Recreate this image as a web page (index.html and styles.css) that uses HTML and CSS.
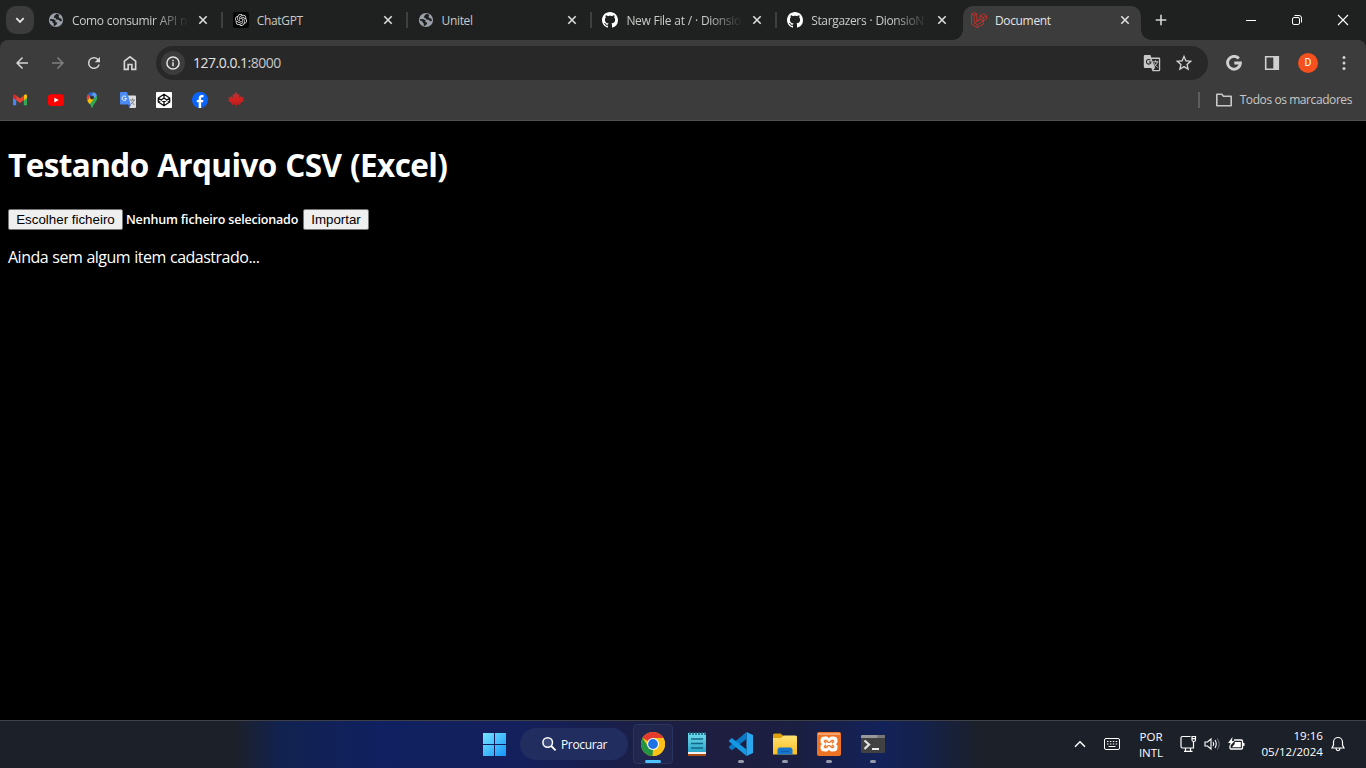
FILE: index.html
```html
<!DOCTYPE html>
<html lang="pt">
<head>
<meta charset="utf-8">
<title>Document</title>
<link rel="stylesheet" href="styles.css">
</head>
<body>
<svg class="defs" width="0" height="0">
  <symbol id="globe" viewBox="0 0 16 16"><circle cx="8" cy="8" r="7.1" fill="#9aa0a9"/><path d="M8.5 1.8 6.6 3.6 5.8 5.4 7.7 6.2 8.2 7.6 10.8 7.7 12 9.3 14 8.9 13.2 6.6 11.5 6.2 10.6 4.6 11.3 2.8ZM2 7 5.9 7.2 7.6 8.6 7.4 10 9.3 10.8 8.6 12.5 6.5 14 5.7 13.6 5.8 11.4 4.6 10.6 4.2 9.2 2 8.5Z" fill="#1f2120"/></symbol>
  <symbol id="close" viewBox="0 0 10 10"><path d="M1.3 1.3 8.7 8.7M8.7 1.3 1.3 8.7" stroke="#dedede" stroke-width="1.6"/></symbol>
  <symbol id="github" viewBox="0 0 16 16"><path fill="#fff" d="M8 0C3.58 0 0 3.58 0 8c0 3.54 2.29 6.53 5.47 7.59.4.07.55-.17.55-.38 0-.19-.01-.82-.01-1.49-2.01.37-2.53-.49-2.69-.94-.09-.23-.48-.94-.82-1.13-.28-.15-.68-.52-.01-.53.63-.01 1.08.58 1.23.82.72 1.21 1.87.87 2.33.66.07-.52.28-.87.51-1.07-1.78-.2-3.64-.89-3.64-3.95 0-.87.31-1.59.82-2.15-.08-.2-.36-1.02.08-2.12 0 0 .67-.21 2.2.82.64-.18 1.32-.27 2-.27s1.36.09 2 .27c1.53-1.04 2.2-.82 2.2-.82.44 1.1.16 1.92.08 2.12.51.56.82 1.27.82 2.15 0 3.07-1.87 3.75-3.65 3.95.29.25.54.73.54 1.48 0 1.07-.01 1.93-.01 2.2 0 .21.15.46.55.38A8.01 8.01 0 0016 8c0-4.42-3.58-8-8-8z"/></symbol>
</svg>

<header class="tabstrip">
  <div class="tab-search"><svg width="10" height="10" viewBox="0 0 10 10"><path d="M1.3 3.2 5 6.9 8.7 3.2" fill="none" stroke="#e3e3e3" stroke-width="1.8"/></svg></div>
  <div class="tab"><svg class="fav"><use href="#globe"/></svg><span class="title fade">Como consumir API n</span><svg class="x"><use href="#close"/></svg></div>
  <div class="tab"><svg class="fav" viewBox="0 0 16 16"><rect width="16" height="16" rx="2" fill="#050506"/><g transform="translate(2 1.9) scale(.5)"><path fill="#e4e4e4" d="M22.2819 9.8211a5.9847 5.9847 0 0 0-.5157-4.9108 6.0462 6.0462 0 0 0-6.5098-2.9A6.0651 6.0651 0 0 0 4.9807 4.1818a5.9847 5.9847 0 0 0-3.9977 2.9 6.0462 6.0462 0 0 0 .7427 7.0966 5.98 5.98 0 0 0 .511 4.9107 6.051 6.051 0 0 0 6.5146 2.9001A5.9847 5.9847 0 0 0 13.2599 24a6.0557 6.0557 0 0 0 5.7718-4.2058 5.9894 5.9894 0 0 0 3.9977-2.9001 6.0557 6.0557 0 0 0-.7475-7.0729zm-9.022 12.6081a4.4755 4.4755 0 0 1-2.8764-1.0408l.1419-.0804 4.7783-2.7582a.7948.7948 0 0 0 .3927-.6813v-6.7369l2.02 1.1686a.071.071 0 0 1 .038.052v5.5826a4.504 4.504 0 0 1-4.4945 4.4944zm-9.6607-4.1254a4.4708 4.4708 0 0 1-.5346-3.0137l.142.0852 4.783 2.7582a.7712.7712 0 0 0 .7806 0l5.8428-3.3685v2.3324a.0804.0804 0 0 1-.0332.0615L9.74 19.9502a4.4992 4.4992 0 0 1-6.1408-1.6464zM2.3408 7.8956a4.485 4.485 0 0 1 2.3655-1.9728V11.6a.7664.7664 0 0 0 .3879.6765l5.8144 3.3543-2.0201 1.1685a.0757.0757 0 0 1-.071 0l-4.8303-2.7865A4.504 4.504 0 0 1 2.3408 7.872zm16.5963 3.8558L13.1038 8.364 15.1192 7.2a.0757.0757 0 0 1 .071 0l4.8303 2.7913a4.4944 4.4944 0 0 1-.6765 8.1042v-5.6772a.79.79 0 0 0-.407-.667zm2.0107-3.0231l-.142-.0852-4.7735-2.7818a.7759.7759 0 0 0-.7854 0L9.409 9.2297V6.8974a.0662.0662 0 0 1 .0284-.0615l4.8303-2.7866a4.4992 4.4992 0 0 1 6.6802 4.66zM8.3065 12.863l-2.02-1.1638a.0804.0804 0 0 1-.038-.0567V6.0742a4.4992 4.4992 0 0 1 7.3757-3.4537l-.142.0805L8.704 5.459a.7948.7948 0 0 0-.3927.6813zm1.0976-2.3654l2.602-1.4998 2.6069 1.4998v2.9994l-2.5974 1.4997-2.6067-1.4997Z"/></g></svg><span class="title">ChatGPT</span><svg class="x"><use href="#close"/></svg></div>
  <div class="tab"><svg class="fav"><use href="#globe"/></svg><span class="title">Unitel</span><svg class="x"><use href="#close"/></svg></div>
  <div class="tab"><svg class="fav"><use href="#github"/></svg><span class="title fade">New File at / · Dionsio</span><svg class="x"><use href="#close"/></svg></div>
  <div class="tab last"><svg class="fav"><use href="#github"/></svg><span class="title fade">Stargazers · DionsioN</span><svg class="x"><use href="#close"/></svg></div>
  <div class="tab active"><svg class="fav" viewBox="0 0 16 16"><path d="M.5 2 3.2.5 5.8 2V9.2L9 7.3V3.8L12.5 1.8 15.5 3.6V7L12.4 8.8V12L6.3 15.5.5 12.2ZM.5 2 3.2 3.5 5.8 2M3.2 3.5V10.8L6.3 12.5 12.4 9M6.3 12.5V15.5M3.2 10.8 9.3 7.3 12.4 8.8M9 3.8 12.3 5.6 15.5 3.7M12.3 5.6V8.8" fill="none" stroke="#dc3026" stroke-width=".8"/></svg><span class="title">Document</span><svg class="x"><use href="#close"/></svg></div>
  <svg class="plus" width="12" height="12" viewBox="0 0 12 12"><path d="M6 .7V11.3M.7 6H11.3" stroke="#d5d5d5" stroke-width="1.6"/></svg>
  <div class="winctl">
    <svg width="12" height="12" viewBox="0 0 12 12"><path d="M1 6.5H11" stroke="#fff"/></svg>
    <svg width="12" height="12" viewBox="0 0 12 12" fill="none" stroke="#fff"><rect x="1.5" y="3.5" width="7" height="7" rx="1.5"/><path d="M3.5 1.5H8A2.5 2.5 0 0 1 10.5 4V8.5"/></svg>
    <svg width="12" height="12" viewBox="0 0 12 12"><path d="M1 1 11 11M11 1 1 11" stroke="#fff" stroke-width="1.1"/></svg>
  </div>
</header>

<div class="chrome-wrap">
<section class="chrome">
  <div class="toolbar">
    <svg class="nav" viewBox="0 0 24 24"><path fill="#d6d6d6" d="M20 11H7.83l5.59-5.59L12 4l-8 8 8 8 1.41-1.41L7.83 13H20v-2z"/></svg>
    <svg class="nav" viewBox="0 0 24 24"><path fill="#7f7f7f" d="M12 4l-1.41 1.41L16.17 11H4v2h12.17l-5.58 5.59L12 20l8-8z"/></svg>
    <svg class="nav" viewBox="0 0 24 24"><path fill="#d6d6d6" d="M17.65 6.35A7.96 7.96 0 0 0 12 4a8 8 0 1 0 7.73 10h-2.08A6 6 0 1 1 12 6c1.66 0 3.14.69 4.22 1.78L13 11h7V4l-2.35 2.35z"/></svg>
    <svg class="nav" viewBox="0 0 24 24"><path fill="none" stroke="#d6d6d6" stroke-width="2.2" d="M4.5 20.5V9.5L12 3.7l7.5 5.8V20.5h-5v-6.5h-5v6.5z"/></svg>
    <div class="omnibox">
      <span class="info"><svg width="16" height="16" viewBox="0 0 16 16"><circle cx="8" cy="8" r="6.1" fill="none" stroke="#e3e3e3" stroke-width="1.5"/><path d="M8 7.2V11.2M8 4.7V6.2" stroke="#e3e3e3" stroke-width="1.5"/></svg></span>
      <span class="url">127.0.0.1<i>:8000</i></span>
      <svg width="18" height="18" viewBox="0 0 18 18"><path fill="#c7c7c7" d="M2 1H7.5L8.2 3.5H16A1.2 1.2 0 0 1 17.2 4.7V16A1.2 1.2 0 0 1 16 17.2H9.5L8.3 14H2A1.2 1.2 0 0 1 .8 12.8V2.2A1.2 1.2 0 0 1 2 1Z"/><path d="M8.7 4.9H15.9V15.9H10.3L12 14 11 11Z" fill="#282828"/><path d="M7.4 6.2A2.3 2.3 0 1 0 8 8H5.8" fill="none" stroke="#282828" stroke-width="1.1"/><path d="M9.8 7.8H15.3M12.4 6.3V7.8M14.3 7.8C13.8 10.5 12 12 11 12.6M11.2 9.2C12 11 13 12.3 14.7 13.3" fill="none" stroke="#c7c7c7"/></svg>
      <svg class="star" width="20" height="20" viewBox="0 0 24 24"><path fill="#d3d3d3" d="M22 9.24l-7.19-.62L12 2 9.19 8.63 2 9.24l5.46 4.73L5.82 21 12 17.27 18.18 21l-1.63-7.03L22 9.24zM12 15.4l-3.76 2.27 1-4.28-3.32-2.88 4.38-.38L12 6.1l1.71 4.04 4.38.38-3.32 2.88 1 4.28L12 15.4z"/></svg>
    </div>
    <div class="actions">
      <svg width="16" height="16" viewBox="0 0 16 16"><path d="M12.8 3.5A6.4 6.4 0 1 0 14.4 8H8.3" fill="none" stroke="#d0d0d0" stroke-width="2.9"/></svg>
      <svg width="16" height="16" viewBox="0 0 16 16"><path d="M1.7 1.7H14.3V14.3H1.7Z" fill="none" stroke="#d0d0d0" stroke-width="1.6"/><path d="M9.3 1H15V15H9.3Z" fill="#d0d0d0"/></svg>
      <span class="avatar">D</span>
      <svg width="4" height="16" viewBox="0 0 4 16" fill="#d3d3d3"><circle cx="2" cy="2.5" r="1.5"/><circle cx="2" cy="8" r="1.5"/><circle cx="2" cy="13.5" r="1.5"/></svg>
    </div>
  </div>
  <nav class="bookmarks">
    <svg viewBox="0 0 16 16"><path d="M1 4V13.2H4.2V6Z" fill="#4285f4"/><path d="M11.8 6V13.2H15V4Z" fill="#34a853"/><path d="M11.8 3.4 13.3 2.3Q15 2 15 4V6L11.8 8.5Z" fill="#fbbc04"/><path d="M4.2 3.6 8 6.5 11.8 3.6V8.3L8 11 4.2 8.3Z" fill="#ea4335"/><path d="M1 4Q1 2 2.9 2.5L4.2 3.6V8.3L1 6Z" fill="#d52a27"/></svg>
    <svg viewBox="0 0 16 16"><rect y="2.2" width="16" height="11.8" rx="3" fill="#f00"/><path d="M6.3 5.7 10.8 8.1 6.3 10.5Z" fill="#fff"/></svg>
    <svg viewBox="0 0 16 16"><path d="M3.1 8.3C4.5 11 7 12.2 7.3 15.2Q8 16.2 8.7 15.2C9 12.2 13.3 9.5 13.3 5.5L12.7 3.2Z" fill="#34a853"/><path d="M2.7 5.6A5.4 5.4 0 0 1 4 2.1L6.5 4.2 3.5 9.1Q2.7 7.5 2.7 5.6Z" fill="#ea4335"/><path d="M3.5 9.1 6 4.5 9.9 7.1 5.6 12.2Z" fill="#fbbc04"/><path d="M4 2.1A5.3 5.3 0 0 1 9.7.3L6 5.2Z" fill="#2a67c9"/><path d="M9.7.3Q12 1 12.9 3.3L9.2 7.5 7.2 3.5Z" fill="#5a9cf8"/><circle cx="8" cy="5.4" r="2" fill="#333"/></svg>
    <svg viewBox="0 0 16 16"><path d="M6 3.5H15A1 1 0 0 1 16 4.5V15A1 1 0 0 1 15 16H9.5Z" fill="#ddd"/><path d="M1 0H7L10.8 12.5H1A1 1 0 0 1 0 11.5V1A1 1 0 0 1 1 0Z" fill="#4b8bf5"/><path d="M7.8 12.5H11L9 16Z" fill="#3157b5"/><path d="M6 4.8A2.2 2.2 0 1 0 6.5 6.5H4.6" fill="none" stroke="#fff"/><path d="M10 8H15M12.5 6.5V8M14 8Q13 11 11 12M11.5 9.5 14.3 13" fill="none" stroke="#757d86" stroke-width=".9"/></svg>
    <svg viewBox="0 0 16 16"><rect width="16" height="16" rx="1" fill="#fff"/><path d="M8 2.2 13.7 6V10L8 13.8 2.3 10V6ZM8 2.2V6M8 10V13.8M2.3 6 8 10 13.7 6M2.3 10 8 6 13.7 10" fill="none" stroke="#111" stroke-width="1.3" stroke-linejoin="round"/></svg>
    <svg viewBox="0 0 16 16"><circle cx="8" cy="8" r="8" fill="#0866ff"/><path fill="#fff" d="M6.7 16V10.3H4.8V8H6.7V6.5C6.7 4 8 2.9 9.9 2.9Q11 2.9 11.5 3.1V5.2H10.4C9.4 5.2 9.1 5.7 9.1 6.6V8H11.4L11 10.3H9.1V16Z"/></svg>
    <svg viewBox="0 0 16 16"><defs><linearGradient id="leaf" x2="0" y2="1"><stop stop-color="#a8383b"/><stop offset=".5" stop-color="#d0201f"/><stop offset="1" stop-color="#b01a1c"/></linearGradient></defs><path d="M8 0 10 2.6 11.5 2.2 11.1 5.7 13 4.1 13.500 5.400 15.600 5 14.900 7.500 15.900 8.400 12.300 11.300 12.500 13 8.500 12.500V15.600H7.500V12.500L3.500 13 3.700 11.300.1 8.400 1.100 7.500.4 5 2.500 5.400 3 4.100 4.900 5.700 4.500 2.200 6 2.600Z" fill="url(#leaf)"/></svg>
    <div class="allmarks">
      <svg width="18" height="16" viewBox="0 0 18 16"><path d="M1.8 2.3H6.8L8.5 4.3H16.2V13.7H1.8Z" fill="none" stroke="#c7c7c7" stroke-width="1.6" stroke-linejoin="round"/></svg>
      <span>Todos os marcadores</span>
    </div>
  </nav>
</section>
</div>

<main class="page">
  <h1>Testando Arquivo CSV (Excel)</h1>
  <form class="upload"><button type="button" class="choose">Escolher ficheiro</button><span class="filename">Nenhum ficheiro selecionado</span><button type="button" class="import">Importar</button></form>
  <p>Ainda sem algum item cadastrado...</p>
</main>

<footer class="taskbar">
  <div class="apps">
    <svg class="win" width="24" height="24" viewBox="0 0 24 24"><defs><linearGradient id="w" gradientUnits="userSpaceOnUse" x1="0" y1="0" x2="24" y2="24"><stop stop-color="#7be9ff"/><stop offset="1" stop-color="#1595fa"/></linearGradient></defs><path fill="url(#w)" d="M1 1H12V12H1ZM13 1H24V12H13ZM1 13H12V24H1ZM13 13H24V24H13Z"/></svg>
    <div class="search"><svg width="16" height="16" viewBox="0 0 16 16"><circle cx="6.7" cy="6.5" r="4.8" fill="#3b4a78" stroke="#fff" stroke-width="1.5"/><path d="M10.2 10 14.6 14.3" stroke="#fff" stroke-width="1.8"/></svg><span>Procurar</span></div>
    <div class="app current"><svg viewBox="0 0 24 24"><circle cx="12" cy="12" r="12" fill="#fbc116"/><path d="M12 12H12L1.6 6A12 12 0 0 1 22.4 6Z" fill="#e33b2e"/><path d="M1.6 6 7.2 15 12 17.5 11.5 24A12 12 0 0 1 1.6 6Z" fill="#229342"/><path d="M22.4 6H12V12L16.8 14.7 11.5 24A12 12 0 0 0 22.4 6Z" fill="#fbc116"/><circle cx="12" cy="12" r="6" fill="#fff"/><circle cx="12" cy="12" r="4.9" fill="#1f72e6"/></svg></div>
    <div class="app"><svg viewBox="0 0 24 24"><defs><linearGradient id="n" x2="0" y2="1"><stop stop-color="#70dcee"/><stop offset="1" stop-color="#2ba5c7"/></linearGradient></defs><path d="M3 20H21V24H3Z" fill="#a84d18"/><path d="M3 19H21V22H3Z" fill="#f4f0ed"/><path d="M3 1H21V20H3Z" fill="url(#n)"/><path d="M5 0V3M8 0V3M11 0V3M14 0V3M17 0V3M20 0V3" stroke="#175f7b" stroke-width="1.5"/><path d="M6 7H18M6 11.5H18M6 16H18" stroke="#126889" stroke-width="1.7"/></svg></div>
    <div class="app run"><svg viewBox="0 0 24 24"><path d="M17.5 0 24 3V21L17.5 24Z" fill="#29a8f0"/><path d="M17.5 0V7L3 18.2 0 16V14.5Z" fill="#0879c6"/><path d="M0 8.5 2.8 6 17.5 17.5V24L0 9.5Z" fill="#1699e5"/></svg></div>
    <div class="app run"><svg viewBox="0 0 24 24"><defs><linearGradient id="f" x2="0" y2="1"><stop stop-color="#ffe273"/><stop offset="1" stop-color="#f9bd20"/></linearGradient></defs><path d="M0 3Q0 1.5 1.5 1.5H7.5L10.5 4H22.5Q24 4 24 5.5V8H0Z" fill="#dfa00c"/><path d="M0 6H8L10.5 3.5H22.5Q24 3.5 24 5V22.5H0Z" fill="url(#f)"/><path d="M4.5 22.5V18Q4.5 15.5 7 15.5H17Q19.5 15.5 19.5 18V22.5Z" fill="#1775cd"/><path d="M8 19.5H16" stroke="#0f5cae" stroke-width="1.2"/></svg></div>
    <div class="app run"><svg viewBox="0 0 24 24"><rect width="24" height="24" rx="2" fill="#ee7423"/><path d="M1 1H23V3H1Z" fill="#f5a36d"/><path d="M7.5 5.5H9.8L12 7.5 14.2 5.5H16.5Q19.5 5.5 19.5 8.5V10L18 12 19.5 14V15.5Q19.5 18.5 16.5 18.5H14.2L12 16.5 9.8 18.5H7.5Q4.5 18.5 4.5 15.5V14L6 12 4.5 10V8.5Q4.5 5.5 7.5 5.5Z" fill="#fff" stroke="#fff" stroke-width="2" stroke-linejoin="round"/><path d="M7.5 8.5H9.2L12 11 14.8 8.5H16.5M7.5 15.5H9.2L12 13 14.8 15.5H16.5M7.5 8.5V9.5L9.5 12 7.5 14.5V15.5M16.5 8.5V9.5L14.5 12 16.5 14.5V15.5" fill="none" stroke="#ee7423" stroke-width="1.4"/><path d="M8.5 12H15.5" stroke="#fff" stroke-width="2.2"/></svg></div>
    <div class="app run"><svg viewBox="0 0 24 24"><rect y="3" width="24" height="18" rx="1.5" fill="#414141"/><path d="M0 6V4Q0 3 1 3H23Q24 3 24 4V6Z" fill="#999"/><path d="M8 3H24V6H16.5V3Z" fill="#777"/><path d="M3.5 8.5 8 12.5 3.5 17" fill="none" stroke="#e2e2e2" stroke-width="2.3"/><path d="M11 17H18" stroke="#fff" stroke-width="1.8"/></svg></div>
  </div>
  <div class="tray">
    <svg width="12" height="8" viewBox="0 0 12 8"><path d="M1 6.7 6 1.7 11 6.7" fill="none" stroke="#fff" stroke-width="1.5"/></svg>
    <svg class="kbd" width="16" height="12" viewBox="0 0 16 12" fill="none" stroke="#fff"><rect x=".5" y=".5" width="15" height="11" rx="1.5"/><path d="M3 3.5H13.5M3 6H13.5" stroke-dasharray="1.5 1.4"/><path d="M4.5 8.5H11.5"/></svg>
    <div class="lang"><span>POR</span><span>INTL</span></div>
    <svg class="net" width="17" height="18" viewBox="0 0 17 18" fill="none" stroke="#fff" stroke-width="1.2"><path d="M10.5 1.5H2.5Q1 1.5 1 3V11.5Q1 13 2.5 13H13.5V7M5.5 13V16M10.5 13V16M4 16.4H12.5M12 1.5H15.5V5Q15.5 6.5 13.8 6.5 12 6.5 12 5ZM12 3.7H15.5"/></svg>
    <svg class="vol" width="17" height="16" viewBox="0 0 17 16" fill="none" stroke="#fff" stroke-width="1.1"><path d="M1 6V10H3.5L7 13V3L3.5 6ZM9 6Q10.5 8 9 10M11 4Q13.5 8 11 12"/><path d="M13.2 2.5Q17.3 8 13.2 13.5" stroke="#666b76"/></svg>
    <svg class="bat" width="17" height="16" viewBox="0 0 17 16"><path d="M6 4H13.5Q14.5 4 14.5 5V12Q14.5 13 13.5 13H3Q2 13 2 12V9.5" fill="none" stroke="#fff" stroke-width="1.3"/><path d="M6.7 6H12.8V11.2H4L6.7 8ZM15 7H16.5V10H15ZM4.5 1 0 7H2.5L1.5 10.5 6.5 5H4Z" fill="#fff"/></svg>
    <div class="clock"><span>19:16</span><span>05/12/2024</span></div>
    <svg class="bell" width="14" height="16" viewBox="0 0 14 16" fill="none" stroke="#fff" stroke-width="1.2"><path d="M1 12 2.5 9V6A4.5 4.5 0 0 1 11.5 6V9L13 12ZM5 12.5Q5.3 14.6 7 14.6 8.7 14.6 9 12.5"/></svg>
  </div>
</footer>
</body>
</html>
```
FILE: styles.css
```css
* { box-sizing: border-box; }
body {
  margin: 0;
  width: 1366px;
  height: 768px;
  display: flex;
  flex-direction: column;
  overflow: hidden;
  background: #000;
  font: 12px/16px "Open Sans", "Noto Sans", sans-serif;
  color: #e3e3e3;
}
svg { display: block; flex: none; }
.defs { position: absolute; }
.tabstrip {
  height: 40px;
  flex: none;
  display: flex;
  align-items: center;
  background: #1f2120;
  padding-left: 6px;
}
.tab-search {
  width: 28px;
  height: 28px;
  border-radius: 10px;
  background: #3c3c3c;
  display: grid;
  place-items: center;
  margin-right: 4px;
}
.tab {
  width: 184.8px;
  height: 16px;
  flex: none;
  display: flex;
  align-items: center;
  padding: 0 13px 0 10px;
  border-right: 2px solid #3e403f;
  color: #c9cac9;
}
.tab.last { border-color: transparent; }
.fav { width: 16px; height: 16px; }
.title {
  flex: 1;
  margin: 0 8px;
  padding-top: 1px;
  white-space: nowrap;
  letter-spacing: -.35px;
  word-spacing: .4px;
}
.fade { mask-image: linear-gradient(90deg, #000 82px, transparent 117px); }
.x { width: 10px; height: 10px; }
.tab.active {
  width: 178px;
  height: 34px;
  margin: 6px 0 0 1px;
  padding: 0 11px 6px 8px;
  border: 0;
  border-radius: 10px 10px 0 0;
  background: #3c3c3c;
  color: #e3e3e3;
  position: relative;
}
.tab.active::before, .tab.active::after {
  content: "";
  position: absolute;
  bottom: 0;
  width: 10px;
  height: 10px;
}
.tab.active::before { left: -10px; background: radial-gradient(circle at 0 0, transparent 9.5px, #3c3c3c 10px); }
.tab.active::after { right: -10px; background: radial-gradient(circle at 100% 0, transparent 9.5px, #3c3c3c 10px); }
.plus { margin-left: 14px; }
.winctl { margin: 0 17px 0 auto; display: flex; gap: 34px; }
.chrome-wrap { flex: none; background: #1f2120; }
.chrome {
  height: 81px;
  background: #3c3c3c;
  border-bottom: 1px solid #505050;
  border-radius: 8px 8px 0 0;
}
.toolbar { height: 46px; display: flex; align-items: center; padding-left: 13px; }
.nav { width: 18px; height: 18px; margin-right: 18px; }
.omnibox {
  width: 1052px;
  flex: none;
  height: 34px;
  margin-left: -1px;
  border-radius: 17px;
  background: #282828;
  display: flex;
  align-items: center;
  padding: 0 14px 0 5px;
}
.info {
  width: 24px;
  height: 24px;
  border-radius: 50%;
  background: #3c3c3c;
  display: grid;
  place-items: center;
}
.url { flex: 1; margin-left: 8px; font-size: 14px; letter-spacing: -.5px; }
.url i { font-style: normal; color: #c7c7c7; }
.star { margin-left: 13px; }
.actions { display: flex; align-items: center; margin-left: 18px; }
.actions > * { margin-right: 22px; flex: none; }
.actions > .avatar {
  width: 20px;
  height: 20px;
  border-radius: 50%;
  background: #f4511e;
  color: #fff;
  font: 10.5px/20px Roboto, sans-serif;
  text-align: center;
  margin: 0 24px 0 -4px;
}
.bookmarks { display: flex; align-items: center; height: 28px; padding: 0 14px 0 12px; gap: 20px; }
.bookmarks > svg { width: 16px; height: 16px; }
.allmarks {
  margin-left: auto;
  height: 16px;
  display: flex;
  align-items: center;
  gap: 7px;
  padding-left: 15px;
  border-left: 2px solid #5e5e5e;
  color: #c7c7c7;
  letter-spacing: -.42px;
}
.page {
  flex: 1;
  padding: 1px 8px 0;
  color: #fff;
  font: 16px/21px "Open Sans", "Noto Sans", sans-serif;
}
h1 { margin: 21px 0 23px; font-size: 31.5px; line-height: 43px; font-weight: 700; white-space: nowrap; letter-spacing: -.6px; word-spacing: 1px; }
.upload { display: flex; align-items: center; height: 21px; margin-bottom: 17px; }
button {
  height: 21px;
  padding: 0;
  border: 1px solid #767676;
  border-radius: 2px;
  background: #efefef;
  color: #000;
  font: 13.333px/18px "Liberation Sans", Arial, sans-serif;
}
.choose { width: 115px; }
.import { width: 66px; }
.filename { width: 180px; padding-left: 3px; font: 600 12.5px/18px "Open Sans", sans-serif; letter-spacing: -.18px; white-space: nowrap; }
p { margin: 0; white-space: nowrap; letter-spacing: -.5px; word-spacing: .5px; }
.taskbar {
  height: 48px;
  flex: none;
  border-top: 1px solid #3f4148;
  background: linear-gradient(90deg, #1c2029 0, #1c2029 235px, #12224f 280px, #102060 380px, #14205c 520px, #1b1f44 650px, #1e1e40 730px, #1a1f42 800px, #13225a 880px, #14214c 920px, #1c2029 980px);
  display: flex;
  align-items: center;
  color: #fff;
}
.apps { margin: -1px 0 0 482px; display: flex; align-items: center; }
.search {
  width: 108px;
  height: 32px;
  margin: 0 5px 0 14px;
  border-radius: 16px;
  background: #202d5e;
  display: flex;
  align-items: center;
  padding-left: 21px;
  gap: 4px;
  letter-spacing: -.35px;
}
.search span { padding-top: 1px; }
.app {
  width: 40px;
  height: 40px;
  margin-right: 4px;
  border-radius: 4px;
  display: grid;
  place-items: center;
  position: relative;
}
.app svg { width: 24px; height: 24px; }
.current { background: #20264e; border: 1px solid #2c335d; }
.run::after, .current::after {
  content: "";
  position: absolute;
  left: 17px;
  bottom: 1px;
  width: 6px;
  height: 3px;
  border-radius: 2px;
  background: #969aab;
}
.current::after { left: 11px; bottom: 0; width: 16px; background: #4cc2ff; }
.tray { margin: -1px 21px 0 auto; display: flex; align-items: center; }
.kbd { margin-left: 18px; }
.lang { width: 26px; margin-left: 18px; text-align: center; display: flex; flex-direction: column; align-items: center; font-size: 11.5px; padding-top: 1px; }
.net { margin-left: 16px; }
.vol { margin-left: 7px; }
.bat { margin-left: 7px; }
.clock { width: 64px; margin-left: 14px; display: flex; flex-direction: column; align-items: flex-end; font-size: 11.6px; }
.bell { margin-left: 8px; }
```
